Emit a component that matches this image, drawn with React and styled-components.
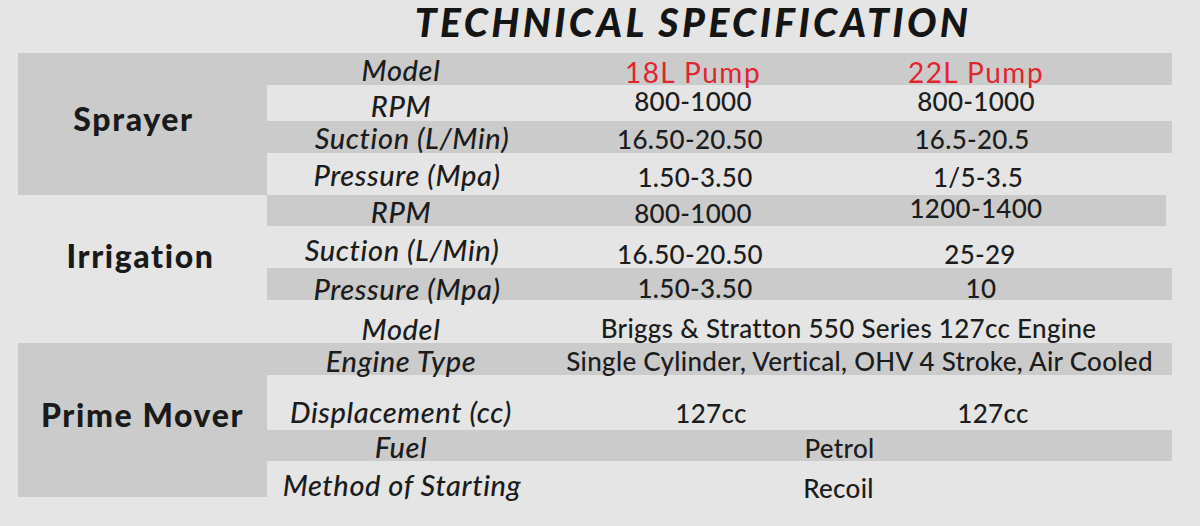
import React from "react";
import styled, { createGlobalStyle } from "styled-components";

const GlobalStyle = createGlobalStyle`
  html, body {
    margin: 0;
    padding: 0;
    background: #e4e5e4;
  }
  body {
    font-family: Lato, "Open Sans", sans-serif;
    color: #1c1c1c;
  }
`;

const GRAY = "#cbcbcb";
const LIGHT = "transparent";

const Page = styled.div`
  width: 1200px;
  height: 526px;
  overflow: hidden;
`;

const Title = styled.h1`
  margin: 0;
  height: 53px;
  box-sizing: border-box;
  padding: 0 0 0 186px;
  text-align: center;
  font-family: Lato, sans-serif;
  font-weight: 900;
  font-style: italic;
  font-size: 39px;
  line-height: 1.15;
  letter-spacing: 3.4px;
  color: #151515;
`;

const Table = styled.div`
  margin-left: 18px;
  width: 1154px;
  display: flex;
  flex-direction: column;
`;

const Group = styled.div`
  display: grid;
  grid-template-columns: 249px 1fr;
`;

const GroupCell = styled.div`
  background: ${(p) => p.$bg};
  display: flex;
  align-items: center;
  justify-content: center;
  padding-bottom: ${(p) => p.$pb}px;
  padding-right: ${(p) => p.$pr || 0}px;
  font-weight: 900;
  font-size: 32px;
  line-height: 1;
  letter-spacing: 1.6px;
  color: #1a1a1a;
`;

const Rows = styled.div`
  display: flex;
  flex-direction: column;
`;

const Row = styled.div`
  display: grid;
  grid-template-columns: 268px 316px 250px 1fr;
  height: ${(p) => p.$h}px;
  background: ${(p) => p.$bg};
  margin-right: ${(p) => p.$trim || 0}px;
`;

const Cell = styled.div`
  box-sizing: border-box;
  text-align: center;
  white-space: nowrap;
  line-height: 1;
  padding-top: ${(p) => Math.max(0, p.$pt)}px;
  padding-left: ${(p) => (p.$dx > 0 ? p.$dx * 2 : 0)}px;
  padding-right: ${(p) => (p.$dx < 0 ? -p.$dx * 2 : 0)}px;
`;

const Label = styled(Cell)`
  font-style: italic;
  font-weight: 500;
  font-size: 29px;
  letter-spacing: 0.6px;
`;

const Value = styled(Cell)`
  font-weight: 500;
  font-size: 26px;
  letter-spacing: 0.3px;
  color: ${(p) => (p.$red ? "#e1252f" : "#1c1c1c")};
  ${(p) => p.$red && "font-weight: 400; font-size: 28px; letter-spacing: 1.5px;"}
  ${(p) => p.$span && "grid-column: 2 / -1;"}
`;

// baselines measured from the top of each row
const LABEL_ASC = 0.887 * 29;
const VALUE_ASC = 0.887 * 26;
const RED_ASC = 0.887 * 28;

const groups = [
  {
    name: "Sprayer",
    bg: GRAY,
    pb: 10,
    pr: 18,
    rows: [
      { label: "Model", h: 32, bg: GRAY, lb: 28, vals: [{ t: "18L Pump", b: 30, red: true }, { t: "22L Pump", b: 30, red: true }] },
      { label: "RPM", h: 36, bg: LIGHT, lb: 32, vals: [{ t: "800-1000", b: 26 }, { t: "800-1000", b: 26 }] },
      { label: "Suction (L/Min)", lx: 11, h: 32, bg: GRAY, lb: 28, vals: [{ t: "16.50-20.50", b: 28, dx: -3 }, { t: "16.5-20.5", b: 28, dx: -4 }] },
      { label: "Pressure (Mpa)", lx: 6, h: 42, bg: LIGHT, lb: 33, vals: [{ t: "1.50-3.50", b: 34, dx: 2 }, { t: "1/5-3.5", b: 34, dx: 2 }] },
    ],
  },
  {
    name: "Irrigation",
    bg: LIGHT,
    pb: 26,
    pr: 4,
    rows: [
      { label: "RPM", h: 31, bg: GRAY, trim: 6, lb: 28, vals: [{ t: "800-1000", b: 28 }, { t: "1200-1400", b: 23 }] },
      { label: "Suction (L/Min)", lx: 1, h: 42, bg: LIGHT, lb: 35, vals: [{ t: "16.50-20.50", b: 38, dx: -3 }, { t: "25-29", b: 38, dx: 4 }] },
      { label: "Pressure (Mpa)", lx: 6, h: 32, bg: GRAY, lb: 32, vals: [{ t: "1.50-3.50", b: 30, dx: 2 }, { t: "10", b: 30, dx: 5 }] },
      { label: "Model", h: 43, bg: LIGHT, lb: 40, vals: [{ t: "Briggs & Stratton 550 Series 127cc Engine", b: 38, span: true, dx: -5 }] },
    ],
  },
  {
    name: "Prime Mover",
    bg: GRAY,
    pb: 10,
    pr: 0,
    rows: [
      { label: "Engine Type", h: 32, bg: GRAY, lb: 29, vals: [{ t: "Single Cylinder, Vertical, OHV 4 Stroke, Air Cooled", b: 28, span: true, dx: 6 }] },
      { label: "Displacement (cc)", h: 55, bg: LIGHT, lb: 48, vals: [{ t: "127cc", b: 48, dx: 18 }, { t: "127cc", b: 48, dx: 17 }] },
      { label: "Fuel", h: 31, bg: GRAY, lb: 28, vals: [{ t: "Petrol", b: 28, span: true, dx: -14 }] },
      { label: "Method of Starting", lx: 1, h: 36, bg: LIGHT, lb: 35, vals: [{ t: "Recoil", b: 37, span: true, dx: -15 }] },
    ],
  },
];

const SpecRow = ({ row }) => (
  <Row $h={row.h} $bg={row.bg} $trim={row.trim}>
    <Label $pt={row.lb - LABEL_ASC} $dx={row.lx || 0}>
      {row.label}
    </Label>
    {row.vals.map((v, i) => (
      <Value
        key={i}
        $red={v.red}
        $span={v.span}
        $dx={v.dx || 0}
        $pt={v.b - (v.red ? RED_ASC : VALUE_ASC)}
      >
        {v.t}
      </Value>
    ))}
  </Row>
);

export default function App() {
  return (
    <Page>
      <GlobalStyle />
      <Title>TECHNICAL SPECIFICATION</Title>
      <Table>
        {groups.map((g) => (
          <Group key={g.name}>
            <GroupCell $bg={g.bg} $pb={g.pb} $pr={g.pr}>
              {g.name}
            </GroupCell>
            <Rows>
              {g.rows.map((r, i) => (
                <SpecRow key={i} row={r} />
              ))}
            </Rows>
          </Group>
        ))}
      </Table>
    </Page>
  );
}
